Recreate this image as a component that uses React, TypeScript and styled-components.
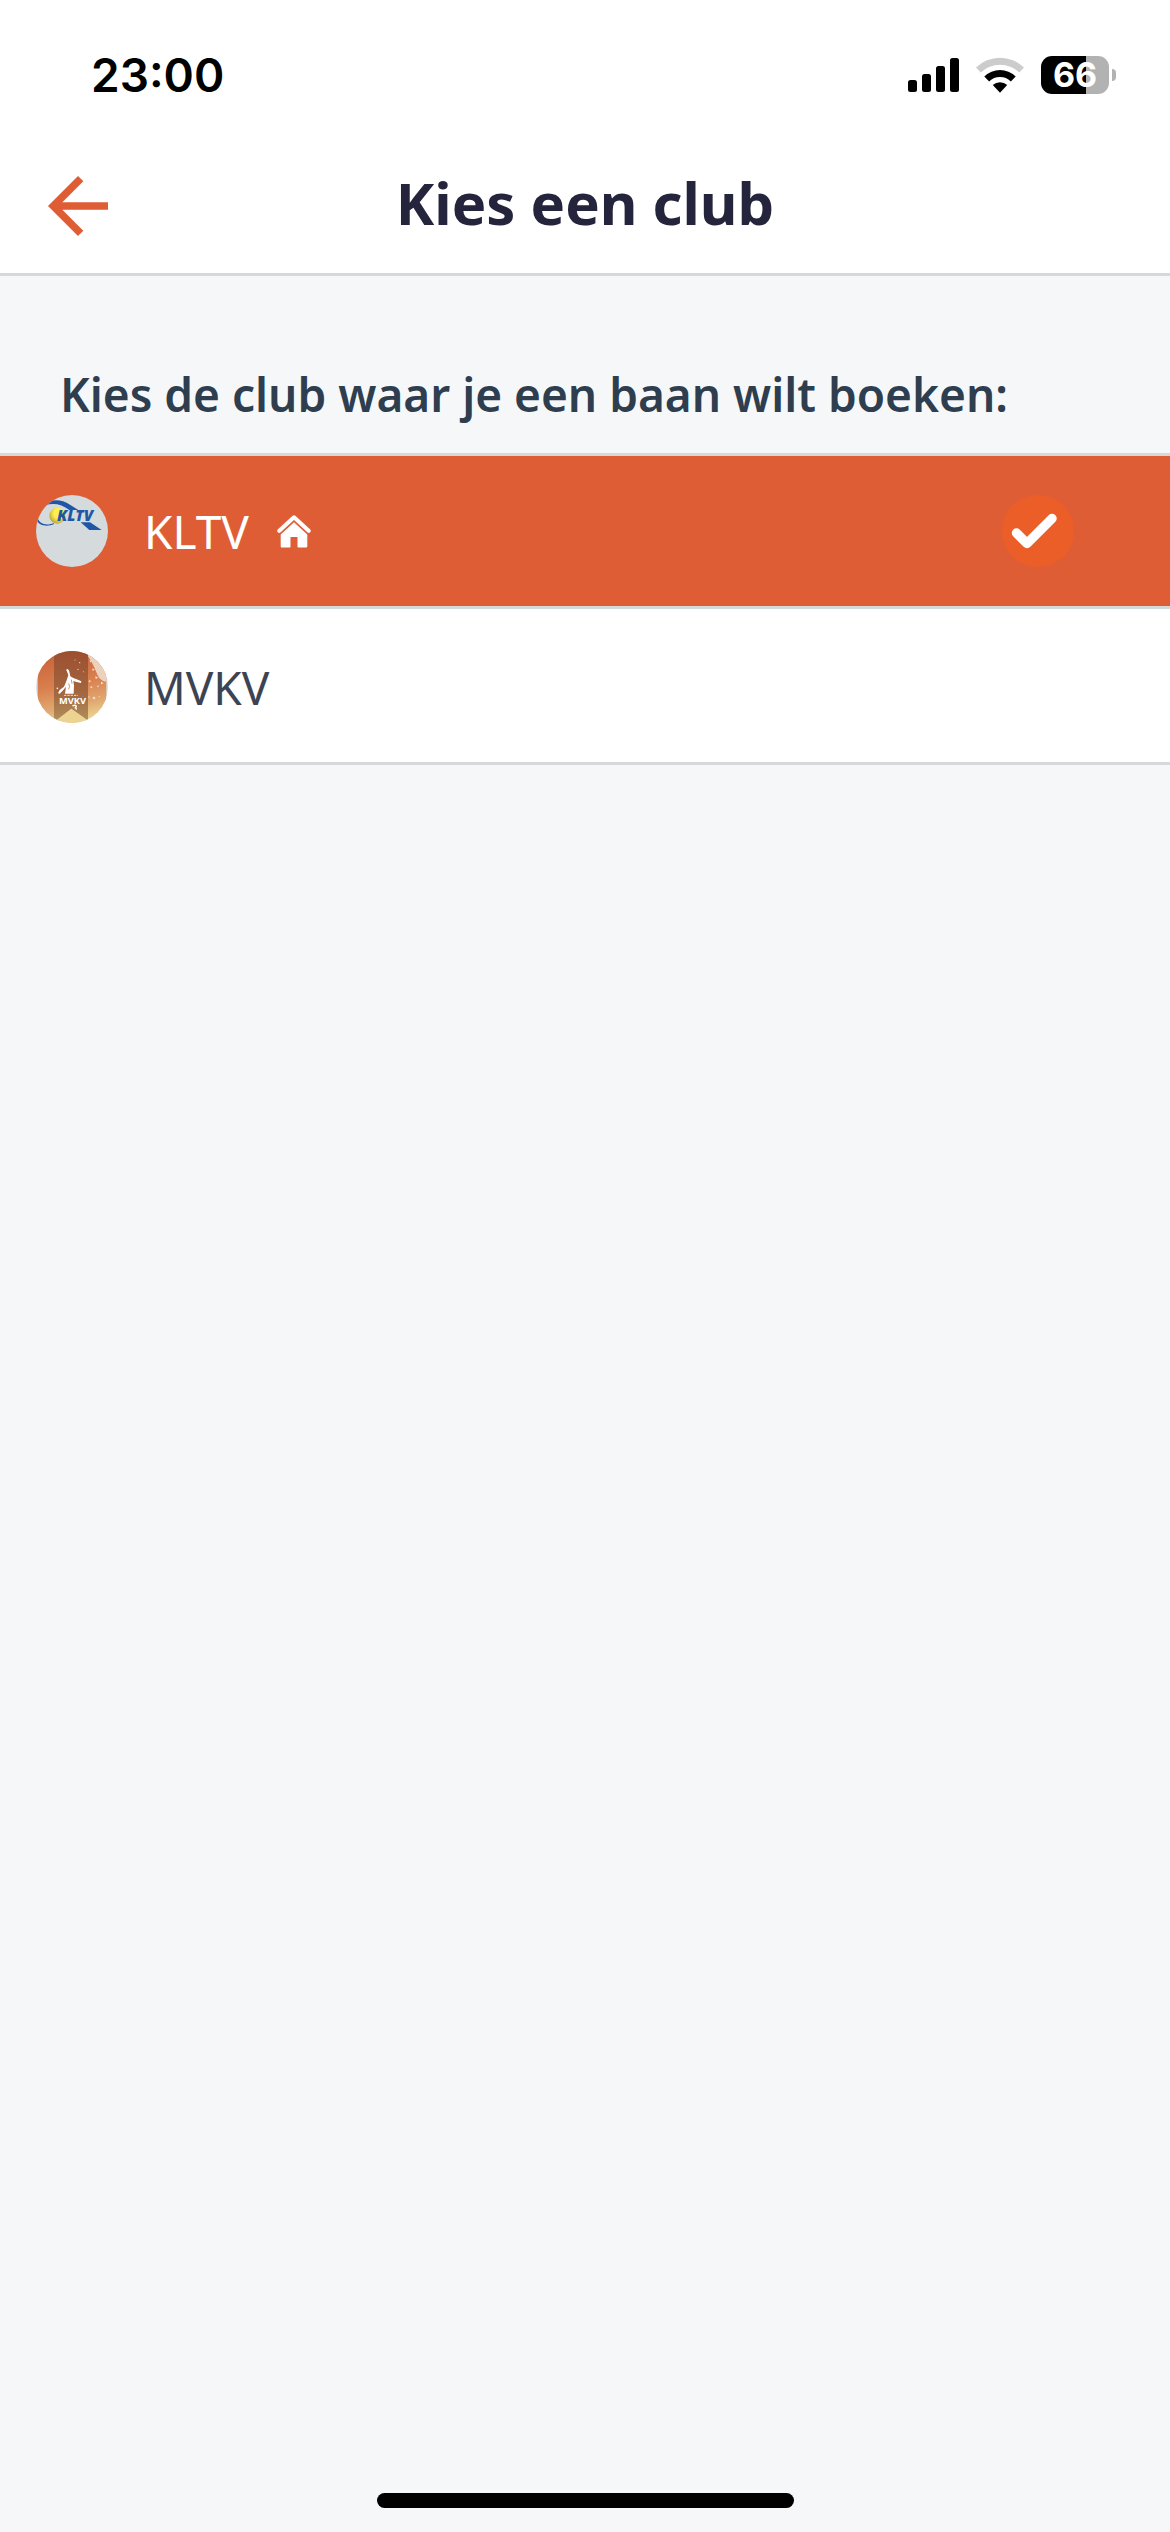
import React, { useState } from "react";
import styled, { createGlobalStyle } from "styled-components";

const GlobalStyle = createGlobalStyle`
  * { box-sizing: border-box; }
  body {
    margin: 0;
    background: #f5f7f9;
    font-family: "Noto Sans", "Open Sans", sans-serif;
  }
`;

const Screen = styled.div`
  min-height: 100vh;
  display: flex;
  flex-direction: column;
  background: #f5f7f9;
`;

const StatusBar = styled.div`
  height: 141px;
  padding: 8px 54px 0 91px;
  display: flex;
  align-items: center;
  justify-content: space-between;
  background: #fff;
  font-family: Inter, sans-serif;
`;

const Clock = styled.time`
  font-size: 46px;
  line-height: 56px;
  font-weight: 600;
  color: #000;
`;

const StatusIcons = styled.div`
  display: flex;
  align-items: center;
  gap: 17px;
`;

const Battery = styled.div`
  display: flex;
  align-items: center;
  gap: 3px;
`;

const BatteryBody = styled.div<{ $level: number }>`
  width: 68px;
  height: 38px;
  border-radius: 11px;
  display: flex;
  align-items: center;
  justify-content: center;
  background: linear-gradient(to right, #000 ${(p) => p.$level}%, #b2b2b2 ${(p) => p.$level}%);
  color: #fff;
  font-size: 34px;
  line-height: 38px;
  font-weight: 700;
`;

const BatteryCap = styled.div`
  width: 4px;
  height: 12px;
  border-radius: 0 4px 4px 0;
  background: #b2b2b2;
`;

const Header = styled.header`
  height: 135px;
  padding: 0 33px 3px;
  display: grid;
  grid-template-columns: 90px 1fr 90px;
  align-items: center;
  background: #fff;
  border-bottom: 3px solid #d4dadc;
`;

const BackButton = styled.button`
  width: 90px;
  height: 90px;
  padding: 0;
  border: 0;
  background: none;
  color: #df5d35;
  cursor: pointer;
`;

const Title = styled.h1`
  margin: 0;
  padding-bottom: 6px;
  text-align: center;
  font-size: 58px;
  line-height: 80px;
  font-weight: 700;
  color: #24243c;
`;

const Content = styled.main`
  flex: 1;
`;

const Prompt = styled.h2`
  margin: 0;
  padding: 88px 60px 29px;
  font-size: 46px;
  line-height: 60px;
  font-weight: 600;
  color: #2e3e4f;
`;

const ClubList = styled.ul`
  margin: 0;
  padding: 0;
  list-style: none;
  border-top: 3px solid #d4dadc;
`;

const ClubItem = styled.li`
  border-bottom: 3px solid #d4dadc;
  background: #fff;

  & + & {
    padding-top: 3px;
  }
`;

const ClubButton = styled.button<{ $selected: boolean }>`
  width: 100%;
  height: 150px;
  padding: 0 96px 0 36px;
  border: 0;
  display: flex;
  align-items: center;
  gap: 36px;
  background: ${(p) => (p.$selected ? "#df5d35" : "#fff")};
  color: ${(p) => (p.$selected ? "#fff" : "#3c4453")};
  font-family: inherit;
  font-size: 46px;
  line-height: 60px;
  font-weight: 400;
  text-align: left;
  cursor: pointer;
`;

const ClubName = styled.span`
  flex: 1;
  display: flex;
  align-items: center;
  gap: 28px;
`;

const HomeIndicator = styled.div`
  width: 417px;
  max-width: 60%;
  height: 15px;
  margin: 0 auto 24px;
  border-radius: 8px;
  background: #000;
`;

const SignalIcon = () => (
  <svg width="51" height="36" viewBox="0 0 51 36" aria-hidden="true">
    <rect x="0" y="23" width="9" height="12" rx="2.5" />
    <rect x="14" y="17" width="9" height="18" rx="2.5" />
    <rect x="28" y="9" width="9" height="26" rx="2.5" />
    <rect x="42" y="1" width="9" height="34" rx="2.5" />
  </svg>
);

const WifiIcon = () => (
  <svg width="48" height="36" viewBox="0 0 48 36" aria-hidden="true">
    <path d="M0 10.5a34.5 34.5 0 0 1 48 0l-4.8 5a27.5 27.5 0 0 0-38.4 0z" fill="#ccc" />
    <path d="M8.300 19.500a22.500 22.500 0 0 1 31.400 0l-4.900 5a15.500 15.500 0 0 0-21.600 0z" />
    <path d="M16.800 28a10.500 10.500 0 0 1 14.400 0L24 35.800z" />
  </svg>
);

const ArrowLeftIcon = () => (
  <svg width="90" height="90" viewBox="0 0 24 24" fill="currentColor" aria-hidden="true">
    <path d="M20 11H7.830l5.590-5.590L12 4l-8 8 8 8 1.410-1.410L7.830 13H20v-2z" />
  </svg>
);

const HomeIcon = () => (
  <svg width="34" height="33" viewBox="0 0 34 33" aria-label="Thuisclub" role="img">
    <path d="M2.300 15.800L17 2.300l14.700 13.500" fill="none" stroke="#fff" strokeWidth="4" strokeLinecap="round" strokeLinejoin="round" />
    <path d="M17 7.200l13.300 12.200v11.800c0 .8-.6 1.300-1.300 1.300h-7.500c-.6 0-1-.4-1-1V22h-7v9.500c0 .6-.4 1-1 1H5c-.8 0-1.300-.5-1.300-1.300V19.400z" fill="#fff" />
  </svg>
);

const CheckIcon = () => (
  <svg width="72" height="72" viewBox="0 0 72 72" aria-hidden="true">
    <circle cx="36" cy="36" r="36" fill="#eb5e28" />
    <path d="M14.500 38l10.500 10.500L50 23.500" fill="none" stroke="#fff" strokeWidth="9.500" strokeLinecap="round" strokeLinejoin="round" />
  </svg>
);

const KltvLogo = () => (
  <svg width="72" height="72" viewBox="48 45 216 216" aria-hidden="true">
    <defs>
      <clipPath id="kltv-clip"><circle cx="156" cy="153" r="108" /></clipPath>
      <radialGradient id="kltv-ball" cx="0.600" cy="0.350" r="0.700">
        <stop offset="0.450" stopColor="#fff04e" />
        <stop offset="1" stopColor="#b79d38" />
      </radialGradient>
    </defs>
    <g clipPath="url(#kltv-clip)">
      <rect x="48" y="45" width="216" height="216" fill="#d5dadc" />
      <path d="M76 75C88 56 124 56 150 74L175 90H148C126 72 102 68 76 75Z" fill="#1f56a5" />
      <path d="M52 112C58 134 82 138 101 129L102 132C82 142 56 137 50 120Z" fill="#1f56a5" />
      <circle cx="112" cy="107" r="24" fill="url(#kltv-ball)" />
      <path d="M182 127H210L245 150H208Z" fill="#1f56a5" />
      <text x="111" y="123" fontFamily="Open Sans, sans-serif" fontSize="46" fontWeight="800" fontStyle="italic" fill="#1f56a5">KLTV</text>
    </g>
  </svg>
);

const MvkvLogo = () => (
  <svg width="72" height="72" viewBox="48 48 216 216" aria-hidden="true">
    <defs>
      <clipPath id="mvkv-clip"><circle cx="156" cy="156" r="108" /></clipPath>
      <linearGradient id="mvkv-sky" x1="0.400" y1="0" x2="0.600" y2="1">
        <stop offset="0" stopColor="#cb6238" />
        <stop offset="0.450" stopColor="#d9804f" />
        <stop offset="0.750" stopColor="#e0a870" />
        <stop offset="1" stopColor="#eedb98" />
      </linearGradient>
      <linearGradient id="mvkv-banner" x1="0" y1="0" x2="0" y2="1">
        <stop offset="0" stopColor="#9c4f30" />
        <stop offset="0.600" stopColor="#a4673f" />
        <stop offset="1" stopColor="#b0935f" />
      </linearGradient>
    </defs>
    <g clipPath="url(#mvkv-clip)">
      <rect x="48" y="48" width="216" height="216" fill="#dbe1e5" />
      <rect x="53" y="48" width="206" height="216" fill="url(#mvkv-sky)" />
      <path d="M192 48C208 66 222 92 230 114C236 132 250 140 259 140V48Z" fill="#ecd2bd" />
      <path d="M208 75l7 3-3 5zM217 100l7 4-6 4zM226 123l8 5-7 4zM243 140l8 5-8 3z" fill="#f5e6d8" />
      <path d="M102 48H204V257L154 221L102 263Z" fill="url(#mvkv-banner)" />
      <path d="M154 221L206 258V264H102V261Z" fill="#ecd392" />
      <g fill="#f3d9c6">
        <circle cx="165" cy="75" r="1.500" /><circle cx="179" cy="83" r="2" />
        <circle cx="174" cy="103" r="2" /><circle cx="190" cy="110" r="1.500" />
        <circle cx="209" cy="139" r="3" /><circle cx="214" cy="157" r="3" />
        <circle cx="222" cy="189" r="4" /><circle cx="234" cy="154" r="2.500" />
        <circle cx="238" cy="184" r="2" /><circle cx="207" cy="186" r="2" />
      </g>
      <path d="M141 101L147 106L151 124L160 129L170 133L184 139L183 144L170 141L160 138L162 151L161 176H135L138 155L130 165L119 176L114 175L119 165L132 155L138 141L142 130L145 120L139 105Z" fill="#fff" />
      <circle cx="112" cy="160" r="2.500" fill="#fff" />
      <path d="M146 145l3 10-4 8M154 134l2 12" fill="none" stroke="#a4673f" strokeWidth="2" />
      <path d="M132 181h42" stroke="#f3e2d4" strokeWidth="3" strokeDasharray="7 3" />
      <text x="117" y="207" fontFamily="Open Sans, sans-serif" fontSize="28" fontWeight="700" fill="#fff">MVKV</text>
      <path d="M157 213q10-5 12 1-1 4-5 4 7 1 4 6" fill="none" stroke="#fff" strokeWidth="4" />
    </g>
  </svg>
);

const clubs = [
  { name: "KLTV", home: true, Logo: KltvLogo },
  { name: "MVKV", home: false, Logo: MvkvLogo },
];

export default function App() {
  const [selected, setSelected] = useState("KLTV");
  return (
    <Screen>
      <GlobalStyle />
      <StatusBar>
        <Clock>23:00</Clock>
        <StatusIcons>
          <SignalIcon />
          <WifiIcon />
          <Battery>
            <BatteryBody $level={66}>66</BatteryBody>
            <BatteryCap />
          </Battery>
        </StatusIcons>
      </StatusBar>
      <Header>
        <BackButton type="button" aria-label="Terug">
          <ArrowLeftIcon />
        </BackButton>
        <Title>Kies een club</Title>
      </Header>
      <Content>
        <Prompt>Kies de club waar je een baan wilt boeken:</Prompt>
        <ClubList>
          {clubs.map(({ name, home, Logo }) => (
            <ClubItem key={name}>
              <ClubButton
                type="button"
                $selected={selected === name}
                aria-pressed={selected === name}
                onClick={() => setSelected(name)}
              >
                <Logo />
                <ClubName>
                  {name}
                  {home && <HomeIcon />}
                </ClubName>
                {selected === name && <CheckIcon />}
              </ClubButton>
            </ClubItem>
          ))}
        </ClubList>
      </Content>
      <HomeIndicator />
    </Screen>
  );
}
